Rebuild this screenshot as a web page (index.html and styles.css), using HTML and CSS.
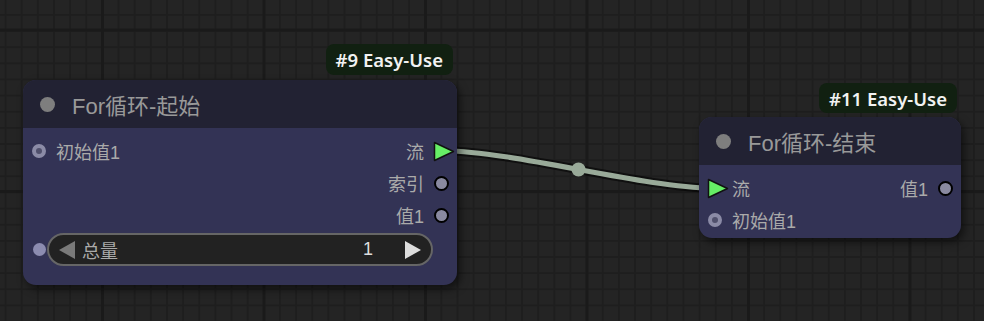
FILE: index.html
```html
<!DOCTYPE html>
<html lang="zh-CN">
<head>
  <meta charset="UTF-8" />
  <meta name="viewport" content="width=device-width, initial-scale=1.0"/>
  <title>For循环</title>
  <link rel="stylesheet" href="styles.css">
</head>
<body>
  <div class="canvas">
    <svg class="links" width="984" height="321" viewBox="0 0 984 321">
      <path d="M445 151 C512 151, 645 188, 712 188" class="link-shadow"/>
      <path d="M445 151 C512 151, 645 188, 712 188" class="link"/>
      <circle cx="578.5" cy="169.5" r="7" class="link-dot"/>
    </svg>

    <!-- node #9 -->
    <div class="node node-start">
      <div class="badge">#9 Easy-Use</div>
      <div class="node-title">
        <span class="title-dot"></span>
        <span class="title-text">For循环-起始</span>
      </div>
      <div class="node-body">
        <div class="row">
          <div class="slot-in"><span class="ring"></span><span class="label">初始值1</span></div>
          <div class="slot-out"><span class="label">流</span>
            <svg class="flow" width="22" height="21" viewBox="0 0 22 21"><polygon points="1.5,1.5 20.5,10.5 1.5,19.5"/></svg>
          </div>
        </div>
        <div class="row">
          <div></div>
          <div class="slot-out"><span class="label">索引</span><span class="dot"></span></div>
        </div>
        <div class="row">
          <div></div>
          <div class="slot-out"><span class="label">值1</span><span class="dot"></span></div>
        </div>
        <div class="widget-row">
          <span class="widget-slot"></span>
          <div class="widget">
            <svg class="arrow" width="16" height="18" viewBox="0 0 16 18"><polygon points="16,0 0,9 16,18" fill="#7a7a7a"/></svg>
            <span class="widget-label">总量</span>
            <span class="widget-value">1</span>
            <svg class="arrow" width="16" height="18" viewBox="0 0 16 18"><polygon points="0,0 16,9 0,18" fill="#dddddd"/></svg>
          </div>
        </div>
      </div>
    </div>

    <!-- node #11 -->
    <div class="node node-end">
      <div class="badge">#11 Easy-Use</div>
      <div class="node-title">
        <span class="title-dot"></span>
        <span class="title-text">For循环-结束</span>
      </div>
      <div class="node-body short">
        <div class="row">
          <div class="slot-in flow-in">
            <svg class="flow" width="22" height="21" viewBox="0 0 22 21"><polygon points="1.5,1.5 20.5,10.5 1.5,19.5"/></svg>
            <span class="label">流</span>
          </div>
          <div class="slot-out"><span class="label">值1</span><span class="dot"></span></div>
        </div>
        <div class="row">
          <div class="slot-in"><span class="ring"></span><span class="label">初始值1</span></div>
          <div></div>
        </div>
      </div>
    </div>
  </div>
</body>
</html>
```

FILE: styles.css
```css
body {
  margin: 0;
  background: #242424;
  font-family: "Liberation Sans", "Noto Sans CJK SC", sans-serif;
}
.canvas {
  position: relative;
  width: 984px;
  height: 321px;
  overflow: hidden;
  background-color: #242424;
  background-image:
    linear-gradient(90deg, #1a1a1a 3px, transparent 3px),
    linear-gradient(0deg, #1a1a1a 3px, transparent 3px),
    linear-gradient(90deg, #1e1e1e 2px, transparent 2px),
    linear-gradient(0deg, #1e1e1e 2px, transparent 2px);
  background-size: 161.5px 100%, 100% 161.5px, 16.15px 100%, 100% 16.15px;
  background-position: 101px 0, 0 31.5px, 4.6px 0, 0 -0.3px;
}
.links {
  position: absolute;
  left: 0;
  top: 0;
}
.link-shadow {
  fill: none;
  stroke: rgba(0,0,0,0.55);
  stroke-width: 9;
}
.link {
  fill: none;
  stroke: #99aa99;
  stroke-width: 5;
}
.link-dot {
  fill: #99aa99;
}
.node {
  position: absolute;
  background: #335;
  border-radius: 13px;
  box-shadow: 3px 4px 8px rgba(0,0,0,0.55);
}
.node-start {
  left: 23px;
  top: 80px;
  width: 434px;
}
.node-end {
  left: 699px;
  top: 117px;
  width: 262px;
}
.badge {
  position: absolute;
  right: 4px;
  bottom: calc(100% + 5px);
  height: 31px;
  padding: 0 10px;
  display: flex;
  align-items: center;
  background: #112011;
  border-radius: 8px;
  color: #f2f2f2;
  font-family: "Noto Sans", sans-serif;
  font-weight: 600;
  font-size: 18.5px;
}
.node-end .badge {
  height: 30px;
  bottom: calc(100% + 4px);
}
.node-title {
  height: 48px;
  display: flex;
  align-items: center;
  background: #223;
  border-radius: 13px 13px 0 0;
}
.title-dot {
  width: 15px;
  height: 15px;
  margin-left: 17px;
  border-radius: 50%;
  background: #7e7e7e;
}
.title-text {
  margin-left: 17px;
  color: #999;
  font-size: 22px;
}
.node-body {
  padding: 7px 0 19px;
}
.node-body.short {
  padding-bottom: 2px;
}
.row {
  height: 32px;
  display: flex;
  align-items: center;
  justify-content: space-between;
}
.label {
  color: #aaa;
  font-size: 18px;
}
.slot-in {
  display: flex;
  align-items: center;
  padding-left: 9px;
}
.slot-in .label {
  margin-left: 10px;
}
.slot-in.flow-in {
  padding-left: 8px;
}
.slot-in.flow-in .label {
  margin-left: 3px;
}
.ring {
  width: 6px;
  height: 6px;
  border: 4px solid #8b8ba6;
  border-radius: 50%;
  background: #50506c;
}
.slot-out {
  display: flex;
  align-items: center;
  padding-right: 8px;
}
.slot-out .label {
  margin-right: 10px;
}
.slot-out .flow {
  margin-right: -6px;
  margin-left: -1px;
}
.dot {
  width: 11px;
  height: 11px;
  border: 2px solid #000;
  border-radius: 50%;
  background: #8a8aa0;
}
.flow polygon {
  fill: #66ee66;
  stroke: #111;
  stroke-width: 1.5;
  stroke-linejoin: round;
}
.widget-row {
  position: relative;
  height: 33px;
  margin-top: 2px;
  padding: 0 24px;
}
.widget-slot {
  position: absolute;
  left: 10px;
  top: 10px;
  width: 13px;
  height: 13px;
  border-radius: 50%;
  background: #8c8cb0;
}
.widget {
  height: 33px;
  box-sizing: border-box;
  display: flex;
  align-items: center;
  padding: 0 10px;
  background: #222;
  border: 2px solid #666;
  border-radius: 17px;
}
.widget-label {
  margin-left: 7px;
  flex: 1;
  color: #aaa;
  font-size: 18px;
}
.widget-value {
  margin-right: 32px;
  color: #ddd;
  font-size: 18px;
}
```
